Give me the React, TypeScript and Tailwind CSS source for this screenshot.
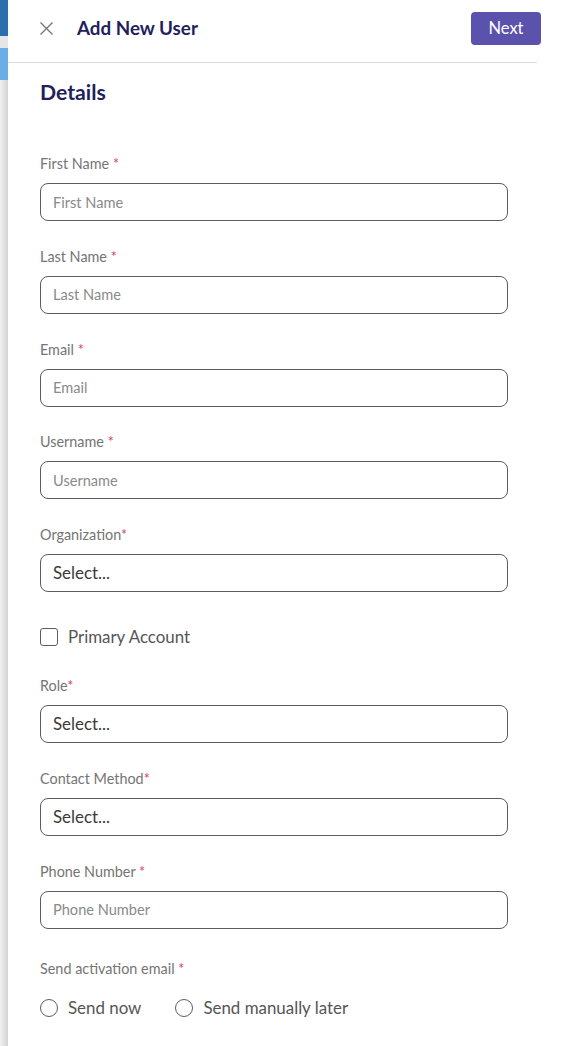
import { useState } from "react";

const font = { fontFamily: "Lato, 'Open Sans', sans-serif" };

function Label({ text, spaced = true }: { text: string; spaced?: boolean }) {
  return (
    <div className="h-[20px] text-[14.4px] leading-[20px] text-[#757575]">
      {text}
      {spaced ? " " : ""}
      <span className="text-[#d6455d]">*</span>
    </div>
  );
}

function TextField({ label, spaced = true }: { label: string; spaced?: boolean }) {
  return (
    <div>
      <Label text={label} spaced={spaced} />
      <input
        placeholder={label}
        className="mt-[9px] block h-[38px] w-[468px] rounded-[8px] border border-[#5c5c5c] px-[12px] text-[14.6px] text-[#333] outline-none placeholder:text-[#8a8a8a]"
      />
    </div>
  );
}

function SelectField({ label }: { label: string }) {
  return (
    <div>
      <Label text={label} spaced={false} />
      <div className="mt-[9px] flex h-[38px] w-[468px] items-center rounded-[8px] border border-[#5c5c5c] px-[12px] text-[16.9px] text-[#3a3a3a]">
        Select...
      </div>
    </div>
  );
}

function Radio({ label, checked, onClick }: { label: string; checked: boolean; onClick: () => void }) {
  return (
    <button type="button" onClick={onClick} className="flex items-center gap-[10px]">
      <span className="flex h-[18px] w-[18px] items-center justify-center rounded-full border border-[#5c5c5c]">
        {checked && <span className="h-[10px] w-[10px] rounded-full bg-[#5b52ad]" />}
      </span>
      <span className="text-[16.9px] text-[#555]">{label}</span>
    </button>
  );
}

export default function App() {
  const [primary, setPrimary] = useState(false);
  const [send, setSend] = useState<"now" | "later" | null>(null);

  return (
    <div className="flex h-[1046px] w-[568px] overflow-hidden bg-white" style={font}>
      {/* page behind the drawer */}
      <div className="flex w-[8px] flex-col">
        <div className="h-[36px] bg-[#2c6fae]" />
        <div className="h-[12px] bg-[#e6e6e6]" />
        <div className="h-[32px] bg-[#6aaee8]" />
        <div className="flex-1 bg-gradient-to-r from-[#f2f2f2] to-[#d2d2d2]" />
      </div>

      <div className="flex-1 bg-white">
        <div className="mb-[5px] flex h-[57px] items-center justify-between pl-[32px] pr-[27px]">
          <div className="flex items-center gap-[24px]">
            <svg width="13" height="13" viewBox="0 0 13 13" className="text-[#777]">
              <path d="M0.5 0.5 L12.5 12.5 M12.5 0.5 L0.5 12.5" stroke="currentColor" strokeWidth="1.4" />
            </svg>
            <h1 className="text-[18.8px] font-bold text-[#231f5c]">Add New User</h1>
          </div>
          <button className="h-[33px] w-[70px] rounded-[4px] bg-[#5b52ad] text-[16.5px] text-white">Next</button>
        </div>
        <div className="h-px w-[529px] bg-[#dddce6]" />

        <div className="pl-[32px]">
          <h2 className="mt-[15px] text-[21.2px] font-bold leading-[28px] text-[#231f5c]">Details</h2>

          <div className="mt-[48px] flex flex-col gap-[25.75px]">
            <TextField label="First Name" />
            <TextField label="Last Name" />
            <TextField label="Email" />
            <TextField label="Username" />
            <SelectField label="Organization" />
          </div>

          <label className="mt-[33px] flex h-[24px] items-center gap-[10px]">
            <input
              type="checkbox"
              checked={primary}
              onChange={(e) => setPrimary(e.target.checked)}
              className="h-[18px] w-[18px] appearance-none rounded-[3px] border border-[#5c5c5c] checked:bg-[#5b52ad]"
            />
            <span className="text-[16.9px] text-[#555]">Primary Account</span>
          </label>

          <div className="mt-[27px] flex flex-col gap-[25.75px]">
            <SelectField label="Role" />
            <SelectField label="Contact Method" />
            <TextField label="Phone Number" />
          </div>

          <div className="mt-[30.5px]">
            <Label text="Send activation email" />
            <div className="mt-[17px] flex h-[24px] items-center gap-[34px]">
              <Radio label="Send now" checked={send === "now"} onClick={() => setSend("now")} />
              <Radio label="Send manually later" checked={send === "later"} onClick={() => setSend("later")} />
            </div>
          </div>
        </div>
      </div>
    </div>
  );
}
